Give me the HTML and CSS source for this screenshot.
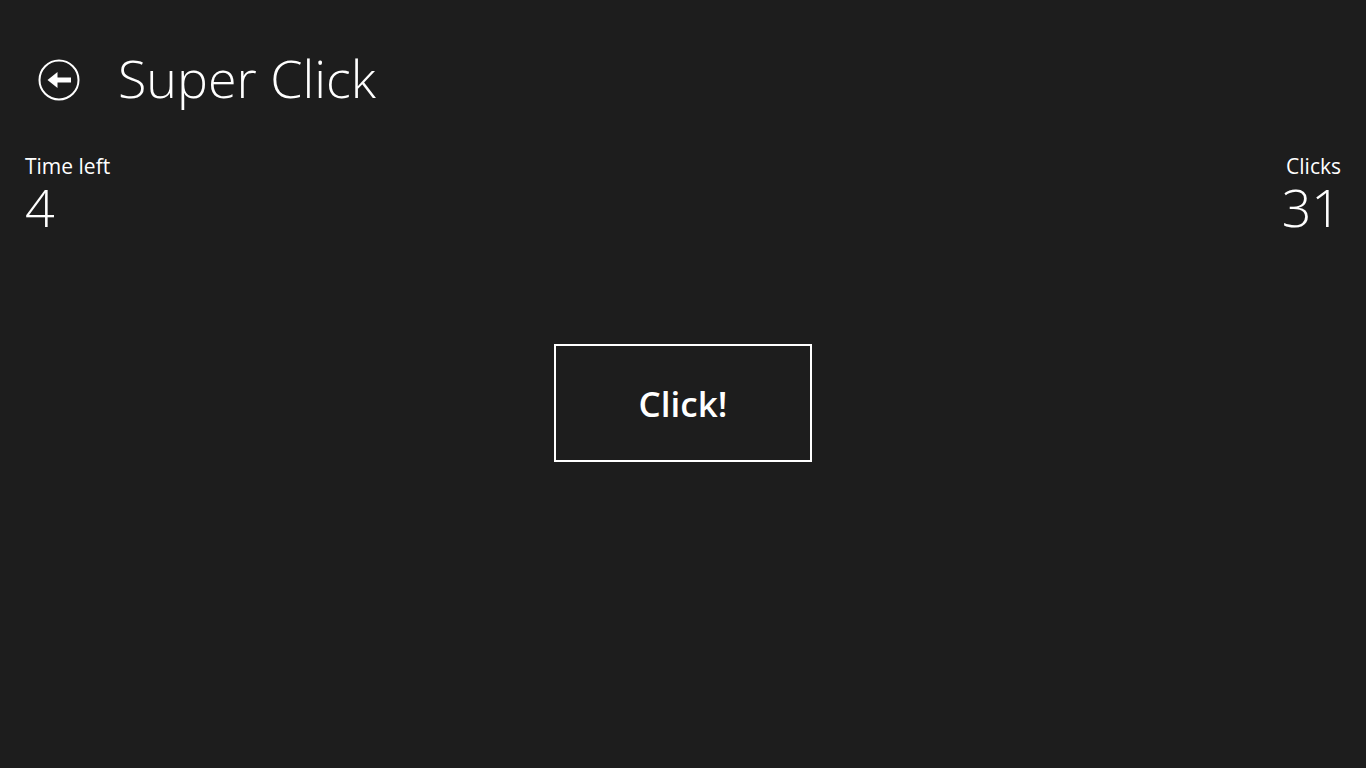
FILE: index.html
```html
<!DOCTYPE html>
<html lang="en">

<head>
    <meta charset="UTF-8">
    <meta name="viewport" content="width=device-width, initial-scale=1.0">
    <title>Super Click</title>
    <link rel="stylesheet" href="styles.css">
</head>

<body>
    <div class="header">
        <div class="back">
            <svg width="42" height="42" viewBox="0 0 42 42">
                <circle cx="21" cy="21" r="19.5" fill="none" stroke="#fff" stroke-width="2" />
                <path d="M9.5 21 L19.5 13 L19.5 18.5 L33 18.5 L33 23.5 L19.5 23.5 L19.5 29 Z" fill="#fff" />
            </svg>
        </div>
        <div class="page-title">Super Click</div>
    </div>

    <div class="stats">
        <div class="stat">
            <div class="label">Time left</div>
            <div class="value">4</div>
        </div>
        <div class="stat right">
            <div class="label">Clicks</div>
            <div class="value">31</div>
        </div>
    </div>

    <div class="play">
        <div class="btn">Click!</div>
    </div>
</body>

</html>
```

FILE: styles.css
```css
* {
    box-sizing: border-box;
}

body {
    margin: 0;
    height: 768px;
    background-color: #1d1d1d;
    color: #fff;
    font-family: "Open Sans", "Noto Sans", sans-serif;
}

.header {
    display: flex;
    align-items: center;
    padding: 38px 0 0 38px;
    height: 122px;
}

.back {
    width: 42px;
    height: 42px;
    margin-right: 38px;
}

.back svg {
    display: block;
}

.page-title {
    font-size: 52px;
    font-weight: 300;
    line-height: 1;
    margin-top: -4px;
}

.stats {
    display: flex;
    justify-content: space-between;
    padding: 32px 25px 0 25px;
}

.label {
    font-size: 21px;
    line-height: 24px;
}

.value {
    font-size: 52px;
    font-weight: 300;
    line-height: 56px;
    margin-top: 1px;
}

.right {
    text-align: right;
}

.play {
    display: flex;
    justify-content: center;
    padding-top: 109px;
}

.btn {
    width: 258px;
    height: 118px;
    border: 2px solid #fff;
    display: flex;
    align-items: center;
    justify-content: center;
    font-size: 35px;
    font-weight: 600;
    cursor: pointer;
}
```
